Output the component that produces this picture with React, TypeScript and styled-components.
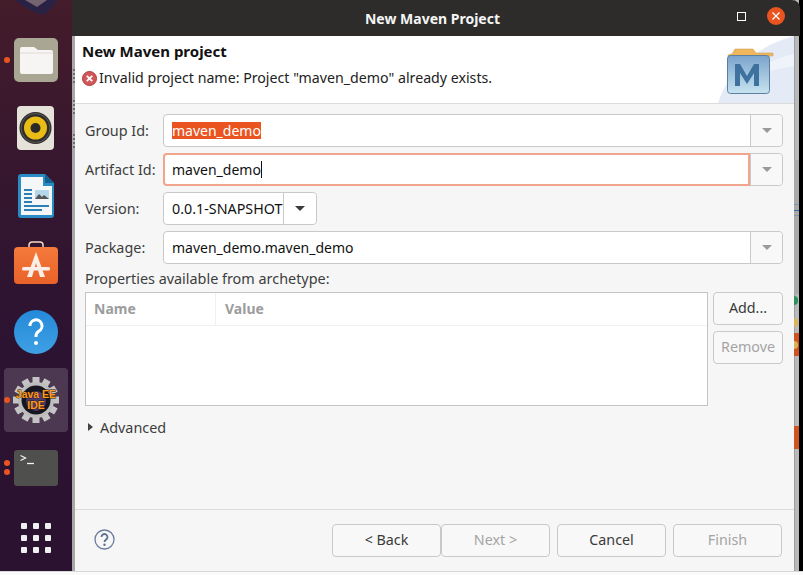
import React from "react";
import styled, { createGlobalStyle } from "styled-components";

const Global = createGlobalStyle`
  html, body { margin: 0; padding: 0; background: #fff; }
  body { font-family: "Noto Sans", "Open Sans", sans-serif; }
`;

const Screen = styled.div`
  width: 803px;
  height: 575px;
  overflow: hidden;
  background: #fff;
  display: flex;
  flex-direction: column;
`;
const Desktop = styled.div`
  height: 571px;
  display: flex;
  flex: none;
`;
const Dock = styled.nav`
  width: 72px;
  flex: none;
  display: flex;
  flex-direction: column;
  background: linear-gradient(180deg, #441c2a 0%, #36172f 30%, #2c1331 60%, #2b1230 100%);
`;
const DockTop = styled.div`
  height: 26px;
  overflow: hidden;
  display: flex;
  justify-content: center;
  align-items: flex-start;
`;
const DockSlot = styled.div`
  position: relative;
  height: 68px;
  display: flex;
  align-items: center;
  justify-content: center;
  flex: none;
`;
const ActiveTile = styled.div`
  width: 64px;
  height: 64px;
  border-radius: 4px;
  background: rgba(255, 255, 255, 0.16);
  display: flex;
  align-items: center;
  justify-content: center;
`;
const RunDot = styled.span<{ $top: number }>`
  position: absolute;
  left: 4px;
  top: ${(p) => p.$top}px;
  width: 6px;
  height: 6px;
  border-radius: 50%;
  background: #e95420;
`;
const Window = styled.main`
  width: 722px;
  flex: none;
  position: relative;
  display: flex;
  flex-direction: column;
  background: #f6f6f6;
  border-left: 3px solid #a8a8a8;
  box-sizing: border-box;
`;
const Grip = styled.span<{ $top: number; $h: number }>`
  position: absolute;
  left: -2px;
  top: ${(p) => p.$top}px;
  height: ${(p) => p.$h}px;
  width: 2px;
  background: repeating-linear-gradient(180deg, #6f6f6f 0 2px, #b5b5b5 2px 4px);
`;
const TitleBar = styled.header`
  height: 36px;
  flex: none;
  position: relative;
  background: #2e2c2b;
  color: #f5f5f5;
  font-size: 14px;
  font-weight: 700;
  display: flex;
  align-items: center;
  justify-content: center;
  margin: 0 -6px 0 -3px;
  padding-right: 7px;
  border-top-right-radius: 8px;
`;
const TitleControls = styled.div`
  position: absolute;
  right: 15px;
  top: 7px;
  display: flex;
  align-items: center;
  gap: 21px;
`;
const MaxBox = styled.span`
  width: 7px;
  height: 7px;
  border: 1px solid #fff;
`;
const CloseBtn = styled.span`
  width: 18px;
  height: 18px;
  border-radius: 50%;
  background: #e95420;
  display: flex;
  align-items: center;
  justify-content: center;
`;
const Banner = styled.section`
  height: 68px;
  flex: none;
  position: relative;
  overflow: hidden;
  background: #fff;
  border-bottom: 1px solid #dcdcdc;
  padding: 6px 0 0 7px;
  box-sizing: border-box;
`;
const BannerTitle = styled.h1`
  margin: 0;
  font-size: 15px;
  line-height: 18px;
  font-weight: 700;
  color: #111;
`;
const BannerMsg = styled.div`
  display: flex;
  align-items: center;
  gap: 2px;
  margin-top: 9px;
  font-size: 14.2px;
  line-height: 18px;
  color: #222;
`;
const BannerArt = styled.svg`
  position: absolute;
  right: 0;
  top: 0;
`;
const Form = styled.section`
  flex: 1;
  display: flex;
  flex-direction: column;
  padding: 10px 11px 0 10px;
  min-height: 0;
`;
const Row = styled.div`
  display: grid;
  grid-template-columns: 78px 1fr;
  align-items: center;
  height: 33px;
  margin-bottom: 6px;
`;
const Label = styled.label`
  font-size: 14.4px;
  color: #3d3d3d;
`;
const Combo = styled.div<{ $narrow?: boolean }>`
  display: flex;
  height: 33px;
  width: ${(p) => (p.$narrow ? "154px" : "auto")};
  box-sizing: border-box;
  border: 1px solid #c9c9c9;
  border-radius: 4px;
  background: #fff;
  position: relative;
`;
const ComboText = styled.div<{ $focus?: boolean; $wide?: boolean }>`
  flex: 1;
  min-width: 0;
  display: flex;
  align-items: center;
  padding-left: 8px;
  font-size: ${(p) => (p.$wide ? "14.3px" : "14px")};
  color: #111;
  white-space: nowrap;
  overflow: hidden;
  ${(p) => (p.$focus ? "box-shadow: 0 0 0 2px #f2a58d inset; margin:-1px 0 -1px -1px; padding-left:9px; border-radius:4px 0 0 4px;" : "")}
`;
const Selected = styled.span`
  background: #e95420;
  color: #fff;
  line-height: 17px;
`;
const Caret = styled.span`
  width: 1px;
  height: 17px;
  background: #111;
`;
const DropBtn = styled.div<{ $dark?: boolean; $w: number }>`
  width: ${(p) => p.$w}px;
  flex: none;
  box-sizing: border-box;
  background: ${(p) => (p.$dark ? "#fff" : "#f8f8f8")};
  border-left: 1px solid #c9c9c9;
  border-radius: 0 4px 4px 0;
  display: flex;
  align-items: center;
  justify-content: center;
  &::after {
    content: "";
    border-left: 5px solid transparent;
    border-right: 5px solid transparent;
    border-top: 5px solid ${(p) => (p.$dark ? "#3a3a3a" : "#9a9a9a")};
  }
`;
const PropsLabel = styled.div`
  font-size: 14.4px;
  line-height: 18px;
  color: #3d3d3d;
  margin: 0 0 4px;
`;
const PropsArea = styled.div`
  display: flex;
  gap: 5px;
`;
const Table = styled.div`
  width: 623px;
  height: 114px;
  box-sizing: border-box;
  border: 1px solid #c4c4c4;
  background: #fff;
`;
const TableHead = styled.div`
  display: flex;
  height: 32px;
  border-bottom: 1px solid #f0f0f0;
`;
const HeadCell = styled.div<{ $w?: number }>`
  width: ${(p) => (p.$w ? p.$w + "px" : "auto")};
  flex: ${(p) => (p.$w ? "none" : 1)};
  box-sizing: border-box;
  padding: 0 0 2px ${(p) => (p.$w ? 8 : 9)}px;
  border-right: ${(p) => (p.$w ? "1px solid #f0f0f0" : "none")};
  font-size: 14px;
  font-weight: 700;
  color: #9c9c9c;
  display: flex;
  align-items: center;
`;
const SideButtons = styled.div`
  display: flex;
  flex-direction: column;
  gap: 6px;
`;
const Btn = styled.button<{ $w: number; $disabled?: boolean }>`
  width: ${(p) => p.$w}px;
  height: 33px;
  box-sizing: border-box;
  padding: 0 0 2px;
  background: #f8f8f8;
  border: 1px solid #c9c9c9;
  border-radius: 4px;
  font-family: inherit;
  font-size: 14.3px;
  color: ${(p) => (p.$disabled ? "#a4a4a4" : "#3a3a3a")};
`;
const Advanced = styled.div`
  display: flex;
  align-items: center;
  gap: 7px;
  margin: 12px 0 0 3px;
  height: 18px;
  font-size: 14.4px;
  color: #3d3d3d;
  &::before {
    content: "";
    border-top: 4px solid transparent;
    border-bottom: 4px solid transparent;
    border-left: 5px solid #444;
  }
`;
const Footer = styled.footer`
  height: 62px;
  flex: none;
  box-sizing: border-box;
  border-top: 1px solid #dcdcdc;
  padding: 14px 12px 0 19px;
  display: flex;
  align-items: flex-start;
`;
const HelpWrap = styled.div`
  margin-top: 5px;
  flex: 1;
  display: flex;
`;
const FootButtons = styled.div`
  display: flex;
  gap: 7px;
`;
const Pair = styled.div`
  display: flex;
`;
const Edge = styled.aside`
  flex: 1;
  display: flex;
  background: #000;
`;
const Rail = styled.div`
  width: 5px;
  flex: none;
  padding-top: 36px;
  display: flex;
  flex-direction: column;
  overflow: hidden;
  background: #b9b9b9;
  box-shadow: inset 1px 0 0 #9d9d9d;
`;
const RailBlank = styled.div<{ $h: number; $dark?: boolean }>`
  height: ${(p) => p.$h}px;
  flex: none;
  background: ${(p) => (p.$dark ? "#a9a9a9" : "transparent")};
`;
const RailTick = styled.div<{ $c: string }>`
  height: 1px;
  flex: none;
  background: ${(p) => p.$c};
`;
const RailDot = styled.div<{ $h: number; $c: string }>`
  height: ${(p) => p.$h}px;
  flex: none;
  display: flex;
  align-items: center;
  &::before {
    content: "";
    width: 4px;
    height: 9px;
    border-radius: 0 4px 4px 0;
    background: ${(p) => p.$c};
  }
`;
const RailBlock = styled.div<{ $h: number; $mark?: boolean }>`
  height: ${(p) => p.$h}px;
  flex: none;
  background: #cf5424;
  display: flex;
  align-items: center;
  ${(p) =>
    p.$mark
      ? `&::before { content: ""; width: 4px; height: 8px; border-radius: 0 4px 4px 0; background: #d9b45a; }`
      : ""}
`;
const BottomStrip = styled.div`
  flex: 1;
  background: #fafafa;
  border-top: 1px solid #d8d8d8;
`;

const FolderIcon = () => (
  <svg width="44" height="44" viewBox="0 0 44 44">
    <rect width="44" height="44" rx="5" fill="#a9a694" />
    <path d="M6 11a2 2 0 0 1 2-2h12l4 3h13a2 2 0 0 1 2 2v20a2 2 0 0 1-2 2H8a2 2 0 0 1-2-2z" fill="#f6f5f3" />
    <path d="M6 15h33" stroke="#dfdcd6" strokeWidth="1" />
  </svg>
);
const RhythmIcon = () => (
  <svg width="38" height="44" viewBox="0 0 38 44">
    <rect width="37" height="44" rx="4" fill="#e5e2d9" />
    <circle cx="18.5" cy="22" r="16" fill="#2f2e2d" />
    <circle cx="18.5" cy="22" r="14.500" fill="none" stroke="#5c5b59" />
    <circle cx="18.5" cy="22" r="11.500" fill="#e9bc16" />
    <circle cx="18.5" cy="22" r="5" fill="#2a2a2a" />
  </svg>
);
const WriterIcon = () => (
  <svg width="37" height="46" viewBox="0 0 37 46">
    <path d="M3 1h24l9 9v32a3 3 0 0 1-3 3H3a3 3 0 0 1-3-3V4a3 3 0 0 1 3-3z" fill="#2a8cc4" />
    <path d="M3 4h22v9h9v29H3z" fill="#f4f6f7" />
    <path d="M27 1l9 9h-9z" fill="#14618f" />
    <path d="M6 17h8M6 21h8M6 25h8M6 29h8M6 33h25M6 37h18" stroke="#2a7fb5" strokeWidth="2" />
    <rect x="17" y="17" width="14" height="9" fill="#b5d7ea" />
    <path d="M17 26l4-5 3 3 2-2 5 4z" fill="#555" />
  </svg>
);
const StoreIcon = () => (
  <svg width="44" height="44" viewBox="0 0 44 44" style={{ marginTop: -3 }}>
    <defs>
      <linearGradient id="sb" x1="0" y1="0" x2="0" y2="1">
        <stop offset="0" stopColor="#f47a3a" />
        <stop offset="1" stopColor="#e8622a" />
      </linearGradient>
    </defs>
    <path d="M15 7V4a3 3 0 0 1 3-3h8a3 3 0 0 1 3 3v3" fill="none" stroke="#f3d9bf" strokeWidth="1.500" />
    <rect y="6" width="44" height="37" rx="4" fill="url(#sb)" />
    <path d="M22 11l-9 25h5l4-14 4 14h5z" fill="#fbeee6" />
    <rect x="8" y="26" width="28" height="3.5" rx="1.5" fill="#fbeee6" />
  </svg>
);
const HelpIcon = () => (
  <svg width="44" height="44" viewBox="0 0 44 44">
    <defs>
      <linearGradient id="hb" x1="0" y1="0" x2="0" y2="1">
        <stop offset="0" stopColor="#2489d8" />
        <stop offset="1" stopColor="#3fa0e4" />
      </linearGradient>
    </defs>
    <circle cx="22" cy="22" r="22" fill="url(#hb)" />
    <path d="M16 16a6 6 0 1 1 9 5c-2 1.300-3 2.500-3 5v1" fill="none" stroke="#fff" strokeWidth="3" />
    <circle cx="22" cy="33" r="2" fill="#fff" />
  </svg>
);
const gearTeeth = Array.from({ length: 12 }, (_, i) => i * 30);
const EclipseIcon = () => (
  <svg width="46" height="46" viewBox="0 0 46 46">
    {gearTeeth.map((a) => (
      <rect key={a} x="19.500" y="0" width="7" height="8" fill="#c4c4c4" transform={`rotate(${a} 23 23)`} />
    ))}
    <circle cx="23" cy="23" r="18" fill="#bdbdbd" />
    <circle cx="23" cy="23" r="14.500" fill="#17151f" />
    <circle cx="23" cy="24" r="10" fill="#4a3c72" />
    <text x="23" y="21" textAnchor="middle" fontFamily="Liberation Sans" fontSize="10.500" fontWeight="700" fill="#ff9a1f" stroke="#2a1600" strokeWidth="0.800" paintOrder="stroke">Java EE</text>
    <text x="23" y="31.500" textAnchor="middle" fontFamily="Liberation Sans" fontSize="10.500" fontWeight="700" fill="#ff9a1f" stroke="#2a1600" strokeWidth="0.800" paintOrder="stroke">IDE</text>
  </svg>
);
const TerminalIcon = () => (
  <svg width="44" height="36" viewBox="0 0 44 36">
    <rect width="44" height="36" rx="3" fill="#4f4f4d" />
    <path d="M6.500 5.500l5 2.500-5 2.500" fill="none" stroke="#f2f2f2" strokeWidth="1.300" />
    <path d="M13 13.500h7" stroke="#f2f2f2" strokeWidth="1.300" />
  </svg>
);
const AppsIcon = () => (
  <svg width="32" height="32" viewBox="0 0 32 32" style={{ marginTop: 4 }}>
    {[0, 12, 24].flatMap((y) =>
      [0, 12, 24].map((x) => <rect key={`${x}-${y}`} x={x + 1} y={y + 1} width="6" height="6" rx="1" fill="#f0f0f0" />)
    )}
  </svg>
);
const ErrorIcon = () => (
  <svg width="15" height="15" viewBox="0 0 15 15">
    <circle cx="7.500" cy="7.500" r="7" fill="#d0585a" stroke="#b53a3c" />
    <path d="M4.800 4.800l5.400 5.400M10.200 4.800l-5.400 5.400" stroke="#fff" strokeWidth="1.800" />
  </svg>
);
const MavenArt = () => (
  <BannerArt width="76" height="67" viewBox="0 0 76 67">
    <defs>
      <linearGradient id="mb" x1="0" y1="0" x2="0" y2="1">
        <stop offset="0" stopColor="#7ba4cc" />
        <stop offset="1" stopColor="#c6e3ef" />
      </linearGradient>
    </defs>
    <path d="M76 0C45 8 12 30 0 67h76z" fill="#e4ebf7" />
    <path d="M76 18C55 22 30 36 22 50c18-12 38-18 54-20z" fill="#eff3fa" />
    <path d="M10 19l4-1 3-5h18l3 4h17v3H10z" fill="#efb65e" stroke="#c8964a" strokeWidth="0.500" />
    <rect x="9.500" y="19.500" width="42" height="38" rx="3" fill="url(#mb)" stroke="#5d7f9f" />
    <path d="M17 50V28h5l7 12 7-12h5v22h-5V37l-7 11-7-11v13z" fill="#3f719f" />
  </BannerArt>
);

export default function App() {
  return (
    <Screen>
      <Global />
      <Desktop>
        <Dock>
          <DockTop>
            <svg width="42" height="16" viewBox="0 0 42 16">
              <path d="M0 0h42c-4 8-10 13-14 15C20 13 8 7 0 0z" fill="#2a2244" />
              <path d="M10 0h22l-10 7z" fill="#75646f" />
            </svg>
          </DockTop>
          <DockSlot>
            <RunDot $top={31} />
            <FolderIcon />
          </DockSlot>
          <DockSlot>
            <RhythmIcon />
          </DockSlot>
          <DockSlot>
            <WriterIcon />
          </DockSlot>
          <DockSlot>
            <StoreIcon />
          </DockSlot>
          <DockSlot>
            <HelpIcon />
          </DockSlot>
          <DockSlot>
            <RunDot $top={31} />
            <ActiveTile>
              <EclipseIcon />
            </ActiveTile>
          </DockSlot>
          <DockSlot>
            <RunDot $top={26} />
            <RunDot $top={35} />
            <TerminalIcon />
          </DockSlot>
          <DockSlot>
            <AppsIcon />
          </DockSlot>
        </Dock>
        <Window>
          <Grip $top={69} $h={14} />
          <Grip $top={100} $h={14} />
          <Grip $top={134} $h={14} />
          <TitleBar>
            New Maven Project
            <TitleControls>
              <MaxBox />
              <CloseBtn>
                <svg width="10" height="10" viewBox="0 0 10 10">
                  <path d="M1.500 1.500l7 7M8.500 1.500l-7 7" stroke="#fff" strokeWidth="1.300" />
                </svg>
              </CloseBtn>
            </TitleControls>
          </TitleBar>
          <Banner>
            <BannerTitle>New Maven project</BannerTitle>
            <BannerMsg>
              <ErrorIcon />
              Invalid project name: Project "maven_demo" already exists.
            </BannerMsg>
            <MavenArt />
          </Banner>
          <Form>
            <Row>
              <Label>Group Id:</Label>
              <Combo>
                <ComboText>
                  <Selected>maven_demo</Selected>
                </ComboText>
                <DropBtn $w={32} />
              </Combo>
            </Row>
            <Row>
              <Label>Artifact Id:</Label>
              <Combo>
                <ComboText $focus>
                  maven_demo
                  <Caret />
                </ComboText>
                <DropBtn $w={32} />
              </Combo>
            </Row>
            <Row>
              <Label>Version:</Label>
              <Combo $narrow>
                <ComboText $wide>0.0.1-SNAPSHOT</ComboText>
                <DropBtn $w={33} $dark />
              </Combo>
            </Row>
            <Row>
              <Label>Package:</Label>
              <Combo>
                <ComboText>maven_demo.maven_demo</ComboText>
                <DropBtn $w={32} />
              </Combo>
            </Row>
            <PropsLabel>Properties available from archetype:</PropsLabel>
            <PropsArea>
              <Table>
                <TableHead>
                  <HeadCell $w={130}>Name</HeadCell>
                  <HeadCell>Value</HeadCell>
                </TableHead>
              </Table>
              <SideButtons>
                <Btn $w={70}>Add...</Btn>
                <Btn $w={70} $disabled>
                  Remove
                </Btn>
              </SideButtons>
            </PropsArea>
            <Advanced>Advanced</Advanced>
          </Form>
          <Footer>
            <HelpWrap>
              <svg width="21" height="21" viewBox="0 0 21 21">
                <circle cx="10.500" cy="10.500" r="9.500" fill="#f6f6f6" stroke="#6b7d9c" strokeWidth="1.300" />
                <path d="M7.500 8a3 3 0 1 1 4.500 2.600c-1 .6-1.500 1.200-1.500 2.400" fill="none" stroke="#5d6f8f" strokeWidth="1.800" />
                <circle cx="10.500" cy="15.800" r="1.200" fill="#5d6f8f" />
              </svg>
            </HelpWrap>
            <FootButtons>
              <Pair>
                <Btn $w={109}>&lt; Back</Btn>
                <Btn $w={109} $disabled>
                  Next &gt;
                </Btn>
              </Pair>
              <Btn $w={109}>Cancel</Btn>
              <Btn $w={109} $disabled>
                Finish
              </Btn>
            </FootButtons>
          </Footer>
        </Window>
        <Edge>
          <Rail>
            <RailBlank $h={124} />
            <RailBlank $h={44} $dark />
            <RailTick $c="#7f98ad" />
            <RailBlank $h={5} $dark />
            <RailTick $c="#2a6fb0" />
            <RailBlank $h={4} $dark />
            <RailTick $c="#7f98ad" />
            <RailBlank $h={78} $dark />
            <RailDot $h={12} $c="#2f8f5b" />
            <RailBlank $h={10} />
            <RailDot $h={12} $c="#d9b45a" />
            <RailBlank $h={5} />
            <RailBlock $h={23} $mark />
            <RailBlank $h={70} />
            <RailBlock $h={23} />
            <RailBlank $h={120} />
          </Rail>
        </Edge>
      </Desktop>
      <BottomStrip />
    </Screen>
  );
}
